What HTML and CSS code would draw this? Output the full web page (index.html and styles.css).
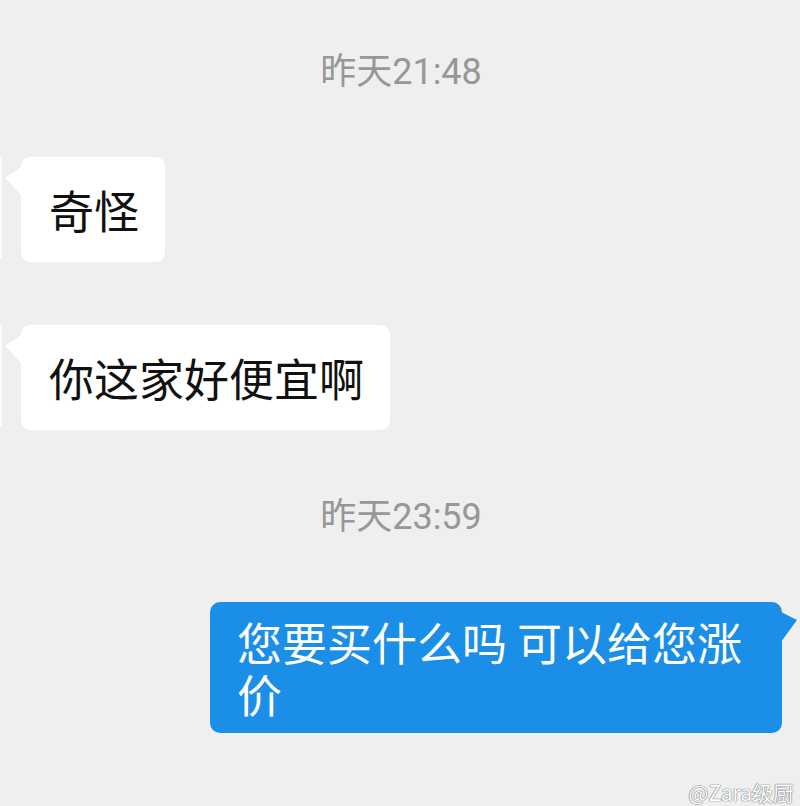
FILE: index.html
```html
<!DOCTYPE html>
<html lang="zh">
<head>
<meta charset="utf-8">
<link rel="stylesheet" href="styles.css">
</head>
<body>
<div class="chat">
  <div class="time">昨天21:48</div>
  <div class="row left">
    <div class="avatar"></div>
    <div class="bubble in">奇怪</div>
  </div>
  <div class="row left second">
    <div class="avatar"></div>
    <div class="bubble in">你这家好便宜啊</div>
  </div>
  <div class="time time2">昨天23:59</div>
  <div class="row right">
    <div class="bubble out">您要买什么吗 可以给您涨价</div>
  </div>
</div>
<div class="watermark">@Zara级厨</div>
</body>
</html>
```
FILE: styles.css
```css
html, body {
  margin: 0;
  padding: 0;
}
body {
  background: #efefef;
  width: 800px;
  height: 806px;
  overflow: hidden;
  position: relative;
  font-family: "Noto Sans CJK SC", "Noto Sans", sans-serif;
}
.chat {
  display: flex;
  flex-direction: column;
  padding-top: 52px;
}
.time {
  font-family: Roboto, "Noto Sans CJK SC", sans-serif;
  font-size: 36px;
  line-height: 40px;
  color: #979797;
  text-align: center;
  height: 40px;
  padding-left: 2px;
}
.time2 {
  margin-top: 67px;
}
.row {
  display: flex;
  align-items: stretch;
}
.row.left {
  margin-top: 65px;
  gap: 19px;
}
.row.left.second {
  margin-top: 63px;
}
.avatar {
  width: 2px;
  background: #fbfbfb;
  margin: 0 0 4px;
}
.row.right {
  margin-top: 65px;
  justify-content: flex-end;
  padding-right: 18px;
}
.bubble {
  position: relative;
  font-size: 45px;
  line-height: 52px;
}
.bubble.in {
  background: #ffffff;
  color: #111111;
  border-radius: 9px;
  padding: 27px 26px 26px 28px;
}
.bubble.in::before {
  content: "";
  position: absolute;
  left: -16px;
  top: 9px;
  width: 17px;
  height: 30px;
  background: #ffffff;
  clip-path: polygon(100% 0, 0 40%, 100% 100%);
}
.bubble.out {
  background: #1b8fe7;
  color: #ffffff;
  border-radius: 10px;
  width: 518px;
  padding: 14px 27px 13px 27px;
}
.bubble.out::after {
  content: "";
  position: absolute;
  right: -15px;
  top: 10px;
  width: 16px;
  height: 30px;
  background: #1b8fe7;
  clip-path: polygon(0 0, 100% 27%, 0 100%);
}
.watermark {
  position: absolute;
  right: 6px;
  bottom: 2px;
  font-family: "Noto Sans CJK SC", "Noto Sans", sans-serif;
  font-size: 21px;
  line-height: 24px;
  color: #ffffff;
  text-shadow: 0 0 1px #777, 0 0 1px #777, 0 0 1px #888;
}
```
